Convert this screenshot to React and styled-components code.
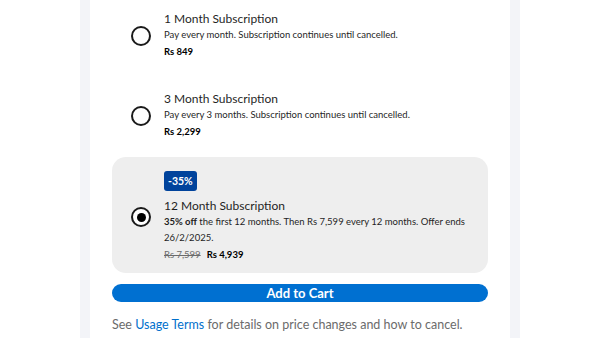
import React from "react";
import styled, { createGlobalStyle } from "styled-components";

const Global = createGlobalStyle`
  html, body { margin: 0; padding: 0; background: #ffffff; }
  body { font-family: Lato, "Open Sans", sans-serif; color: #1f1f1f; overflow: hidden; }
  * { box-sizing: border-box; }
`;

const Page = styled.div`
  width: 600px;
  height: 338px;
  overflow: hidden;
  background: #ffffff;
`;

const Frame = styled.div`
  width: 440px;
  margin-left: 80px;
  min-height: 338px;
  padding: 0 10px;
  background: #f3f4f8;
  display: flex;
`;

const Panel = styled.div`
  flex: 1;
  background: #ffffff;
  padding: 0 22px;
  display: flex;
  flex-direction: column;
`;

const OptionList = styled.div`
  display: flex;
  flex-direction: column;
  gap: 7px;
  margin-top: -3px;
`;

const OptionCard = styled.label`
  display: flex;
  align-items: center;
  gap: 13px;
  padding: 14px 12px 10px 19px;
  border-radius: 14px;
  background: ${(p) => (p.$selected ? "#eeeeee" : "transparent")};
`;

const Radio = styled.span`
  flex: none;
  width: 20px;
  height: 20px;
  border-radius: 50%;
  border: ${(p) => (p.$checked ? "2.5px" : "2px")} solid #1a1a1a;
  display: flex;
  align-items: center;
  justify-content: center;
  background: #ffffff;
  &::after {
    content: "";
    width: 9px;
    height: 9px;
    border-radius: 50%;
    background: #000000;
    display: ${(p) => (p.$checked ? "block" : "none")};
  }
`;

const OptionBody = styled.div`
  display: flex;
  flex-direction: column;
  align-items: flex-start;
  min-width: 0;
`;

const Badge = styled.span`
  background: #00439c;
  color: #ffffff;
  font-weight: 700;
  font-size: 10.5px;
  line-height: 20px;
  height: 20px;
  padding: 0 4px;
  border-radius: 3px;
  margin-bottom: 7px;
`;

const Title = styled.div`
  font-size: 12px;
  line-height: 16px;
  color: #1f1f1f;
`;

const Desc = styled.div`
  font-size: 9.5px;
  line-height: 16px;
  color: #1f1f1f;
  b { font-weight: 700; }
`;

const PriceRow = styled.div`
  display: flex;
  gap: 6px;
  margin-top: 1px;
  font-size: 9.5px;
  line-height: 16px;
`;

const OldPrice = styled.span`
  color: #6b6b6b;
  text-decoration: line-through;
`;

const Price = styled.span`
  font-weight: 700;
  color: #000000;
`;

const CartButton = styled.button`
  margin-top: 11px;
  height: 18px;
  border: none;
  border-radius: 9px;
  background: #0070d1;
  color: #ffffff;
  font-family: Lato, "Open Sans", sans-serif;
  font-weight: 700;
  font-size: 13px;
  line-height: 18px;
  padding: 0;
  cursor: pointer;
`;

const Footer = styled.p`
  margin: 15px 0 0;
  font-size: 12.5px;
  line-height: 16px;
  color: #6b6b6b;
`;

const Link = styled.a`
  color: #0070cc;
  text-decoration: none;
`;

const options = [
  {
    id: 1,
    title: "1 Month Subscription",
    desc: "Pay every month. Subscription continues until cancelled.",
    price: "Rs 849",
  },
  {
    id: 3,
    title: "3 Month Subscription",
    desc: "Pay every 3 months. Subscription continues until cancelled.",
    price: "Rs 2,299",
  },
  {
    id: 12,
    badge: "-35%",
    title: "12 Month Subscription",
    desc: (
      <>
        <b>35% off</b> the first 12 months. Then Rs 7,599 every 12 months. Offer ends 26/2/2025.
      </>
    ),
    oldPrice: "Rs 7,599",
    price: "Rs 4,939",
    selected: true,
  },
];

export default function App() {
  return (
    <>
      <Global />
      <Page>
        <Frame>
          <Panel>
            <OptionList>
              {options.map((o) => (
                <OptionCard key={o.id} $selected={o.selected}>
                  <Radio $checked={o.selected} />
                  <OptionBody>
                    {o.badge && <Badge>{o.badge}</Badge>}
                    <Title>{o.title}</Title>
                    <Desc>{o.desc}</Desc>
                    <PriceRow>
                      {o.oldPrice && <OldPrice>{o.oldPrice}</OldPrice>}
                      <Price>{o.price}</Price>
                    </PriceRow>
                  </OptionBody>
                </OptionCard>
              ))}
            </OptionList>
            <CartButton>Add to Cart</CartButton>
            <Footer>
              See <Link href="#">Usage Terms</Link> for details on price changes and how to cancel.
            </Footer>
          </Panel>
        </Frame>
      </Page>
    </>
  );
}
